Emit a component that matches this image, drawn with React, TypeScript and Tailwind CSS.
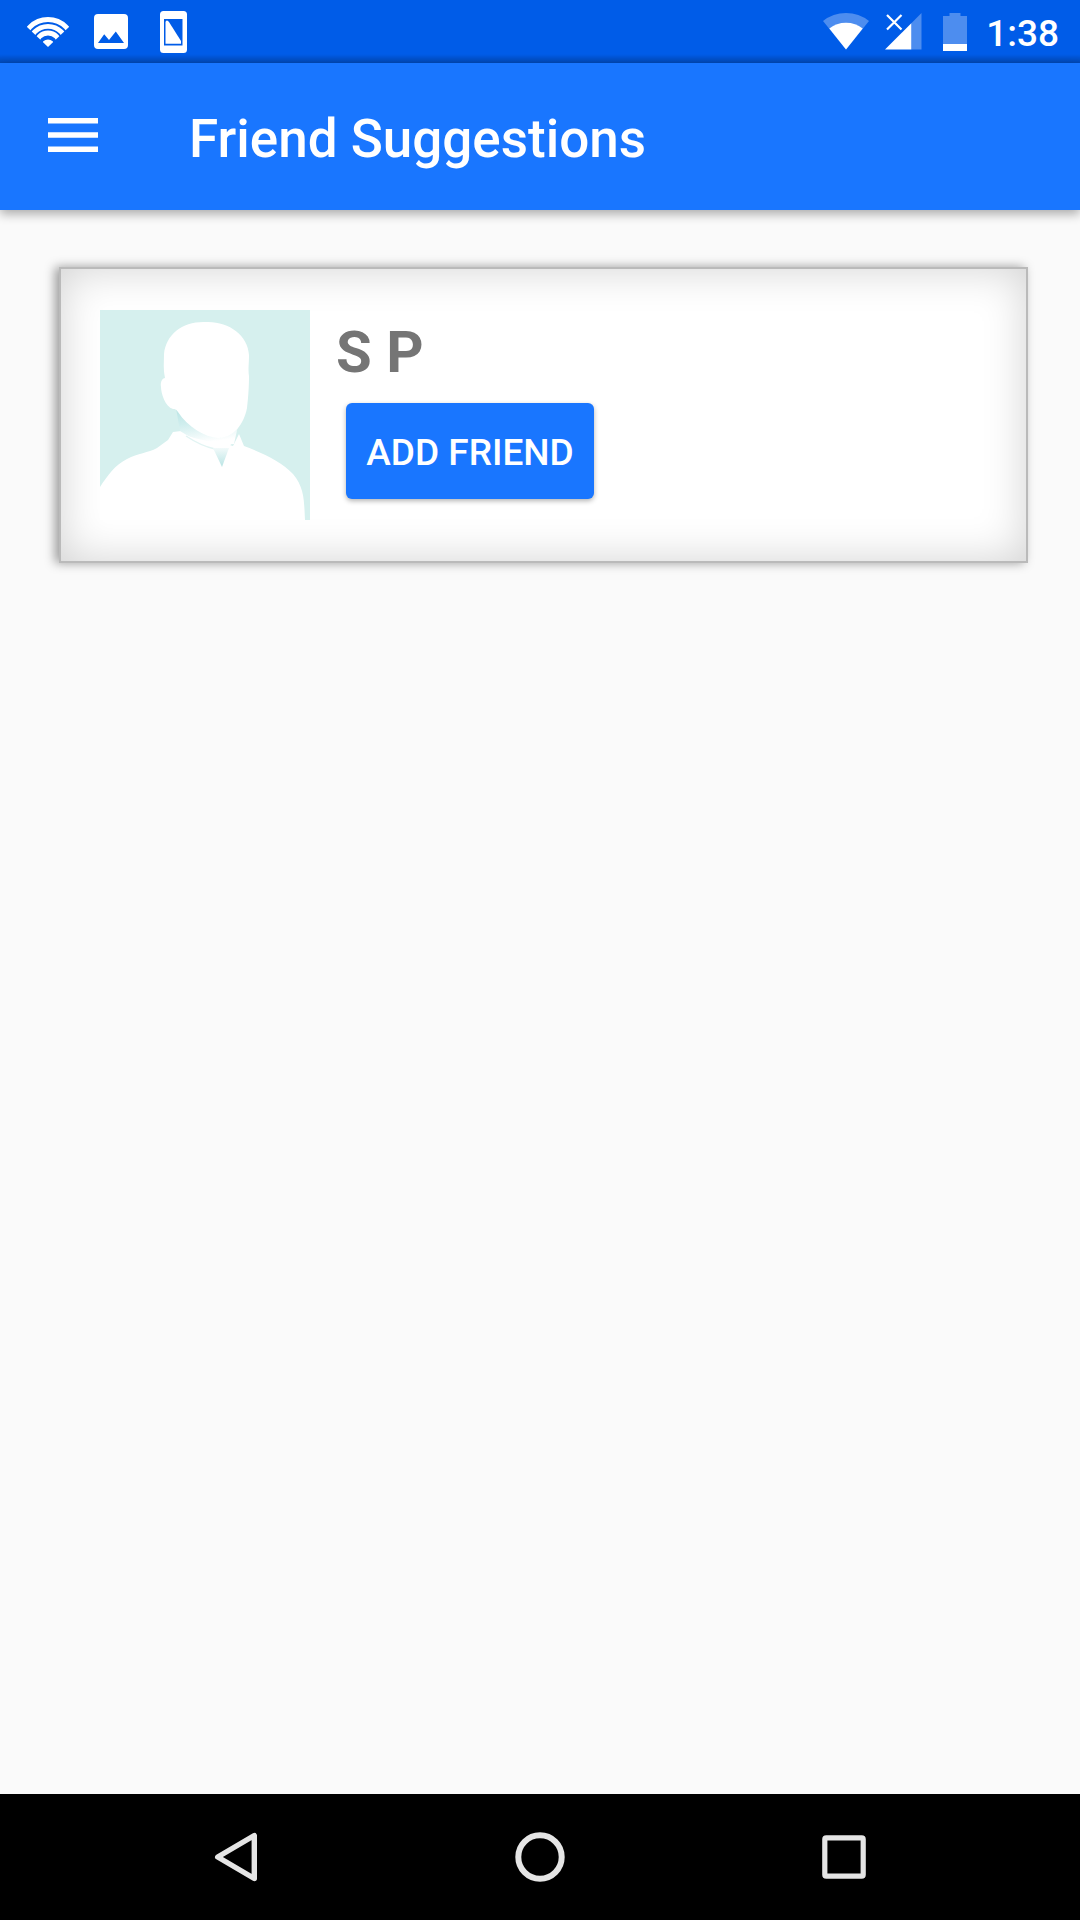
import React from 'react';

function WifiArcsIcon() {
  return (
    <svg width="42" height="30" viewBox="0 0 42 30" aria-hidden="true">
      <clipPath id="fan">
        <path d="M21 30 L-1 9 L-1 -2 H43 V9 Z" />
      </clipPath>
      <g clipPath="url(#fan)" fill="none" stroke="#fff" strokeWidth="4.8">
        <circle cx="21" cy="28" r="25.5" />
        <circle cx="21" cy="28" r="18.7" />
        <circle cx="21" cy="28" r="12" />
        <circle cx="21" cy="29" r="3.3" strokeWidth="6.6" />
      </g>
    </svg>
  );
}

function PictureIcon() {
  return (
    <svg width="34" height="35" viewBox="0 0 34 35" aria-hidden="true">
      <path
        fill="#fff"
        fillRule="evenodd"
        d="M4 0H30a4 4 0 0 1 4 4V31a4 4 0 0 1-4 4H4a4 4 0 0 1-4-4V4a4 4 0 0 1 4-4ZM4 29H30L21.8 17.5L15 26L10.2 20.3Z"
      />
    </svg>
  );
}

function PhoneIcon() {
  return (
    <svg width="27" height="42" viewBox="0 0 27 42" aria-hidden="true">
      <path
        fill="#fff"
        fillRule="evenodd"
        d="M3.5 0H23.5a3.5 3.5 0 0 1 3.5 3.5V38.5a3.5 3.5 0 0 1-3.5 3.5H3.5A3.5 3.5 0 0 1 0 38.5V3.5A3.5 3.5 0 0 1 3.5 0ZM4 8V34.5H22.5V8Z"
      />
      <path fill="#fff" d="M5.5 11.5Q5.5 9.5 7 9.5Q8 9.5 9 11L21 30V32.8H5.5Z" />
    </svg>
  );
}

function WifiLevelIcon() {
  return (
    <svg width="46" height="37" viewBox="0 0 46 37" aria-hidden="true">
      <path fill="#fff" fillOpacity="0.3" d="M23 36.5L0 8Q10 0 23 0T46 8Z" />
      <path fill="#fff" d="M23 36.5L6.3 15.5Q13.5 9.7 23 9.7T39.7 15.5Z" />
    </svg>
  );
}

function SignalIcon() {
  return (
    <svg width="37" height="37" viewBox="0 0 37 37" aria-hidden="true">
      <path fill="#fff" fillOpacity="0.3" d="M26.3 10.3L36.5 0V36.5H26.3Z" />
      <path fill="#fff" d="M0 36.5L26.3 10.2V36.5Z" />
      <path stroke="#fff" strokeWidth="2.2" d="M2 2L16.5 16.5M16.5 2L2 16.5" />
    </svg>
  );
}

function BatteryIcon() {
  return (
    <svg width="24" height="38" viewBox="0 0 24 38" aria-hidden="true">
      <path fill="#fff" fillOpacity="0.3" d="M6.5 0H17.5V3H24V31H0V3H6.5Z" />
      <path fill="#fff" d="M0 31H24V38H0Z" />
    </svg>
  );
}

function Avatar() {
  return (
    <svg className="size-[210px] shrink-0" viewBox="0 0 210 210" role="img" aria-label="Profile picture">
      <defs>
        <linearGradient id="neck" x1="0" y1="0" x2="0.25" y2="1">
          <stop offset="0" stopColor="#b9e4e4" />
          <stop offset="0.45" stopColor="#d0eeee" />
          <stop offset="1" stopColor="#fff" />
        </linearGradient>
        <linearGradient id="collar" x1="0" y1="0" x2="0" y2="1">
          <stop offset="0" stopColor="#f2fafa" />
          <stop offset="1" stopColor="#b9e4e4" />
        </linearGradient>
      </defs>
      <path fill="#d6f0ee" d="M0 0H210V210H0Z" />
      <path
        fill="#fff"
        d="M0 177C8 165 15 155 27 149C38 143 48 143 57 138L68 130L73 122L81 121L133 136L139 124L144 136C163 143 182 152 193 164C205 178 204 193 205 210H0Z"
      />
      <path fill="url(#neck)" d="M76 98L80 121Q104 138 134 134L138 116L120 128Z" />
      <path fill="#fff" d="M82 124Q103 132 131 134L128 140L116 140Z" />
      <path fill="none" stroke="#e2f4f3" strokeWidth="1.5" d="M86 126Q101 136 115 139" />
      <path fill="url(#collar)" d="M113 138L129 138L122 157Z" />
      <path
        fill="#fff"
        d="M106 12C128 11 148 25 149 45C149 54 148 58 149 66C149 78 148 90 147 98C144 114 134 127 119 128C104 127 88 117 78 102C76 99 75 99 73 99C65 97 61 83 61 77C60 71 63 68 65 68C63 60 64 52 64 44C66 24 83 11 106 12Z"
      />
    </svg>
  );
}

export default function App() {
  return (
    <div className="flex min-h-screen flex-col bg-[#fafafa] font-[Roboto,sans-serif]">
      <header className="flex h-[63px] items-center justify-between bg-[#005ce8] bg-[linear-gradient(to_bottom,transparent_54px,rgba(0,0,0,0.22)_63px)] pr-[21px] pl-[27px] text-white">
        <div className="flex items-center gap-[25px]">
          <WifiArcsIcon />
          <PictureIcon />
          <div className="pl-[7px]">
            <PhoneIcon />
          </div>
        </div>
        <div className="flex items-center">
          <div className="flex items-center gap-4 pr-[21px]">
            <WifiLevelIcon />
            <SignalIcon />
          </div>
          <BatteryIcon />
          <time className="pt-1 pl-[19px] text-[37px] leading-10 font-medium">1:38</time>
        </div>
      </header>

      <div className="relative flex h-[147px] items-center bg-[#1976ff] pl-[48px] text-white shadow-[0_4px_10px_rgba(0,0,0,0.32)]">
        <button type="button" aria-label="Open menu" className="pb-1">
          <svg width="50" height="34" viewBox="0 0 50 34" aria-hidden="true">
            <path fill="#fff" d="M0 0H50V5.5H0ZM0 14.3H50V19.8H0ZM0 28.5H50V34H0Z" />
          </svg>
        </button>
        <h1 className="pt-1 pl-[91px] text-[53px] leading-[62px] font-medium">Friend Suggestions</h1>
      </div>

      <main className="flex-1 overflow-hidden pt-[57px] pr-[52px] pl-[59px]">
        <article className="flex border-2 border-[#bababa] bg-white px-[39px] py-[41px] shadow-[-4px_0_10px_rgba(0,0,0,0.38),inset_0_0_44px_rgba(0,0,0,0.18)]">
          <Avatar />
          <div className="pt-2 pl-[26px]">
            <h2 className="text-[58px] leading-[68px] font-bold text-[#757575]">S P</h2>
            <button
              type="button"
              className="mt-[17px] ml-[10px] h-24 w-[248px] rounded-md bg-[#1976ff] pt-[3px] text-[37px] font-medium text-white shadow-[0_2px_5px_rgba(0,0,0,0.3)]"
            >
              ADD FRIEND
            </button>
          </div>
        </article>
      </main>

      <nav aria-label="System" className="grid h-[126px] grid-cols-3 bg-black px-[84px]">
        <button type="button" aria-label="Back" className="flex items-center justify-center">
          <svg width="50" height="50" viewBox="0 0 50 50" fill="none" stroke="#e5e5e5" strokeWidth="5.4" strokeLinejoin="round" aria-hidden="true">
            <path d="M43.3 3.5V46.5L6.7 25Z" />
          </svg>
        </button>
        <button type="button" aria-label="Home" className="flex items-center justify-center">
          <svg width="50" height="50" viewBox="0 0 50 50" fill="none" stroke="#e5e5e5" strokeWidth="6" aria-hidden="true">
            <circle cx="25" cy="25" r="21.7" />
          </svg>
        </button>
        <button type="button" aria-label="Recent apps" className="flex items-center justify-center">
          <svg width="50" height="50" viewBox="0 0 50 50" fill="none" stroke="#e5e5e5" strokeWidth="5.2" aria-hidden="true">
            <rect x="5.8" y="5.8" width="38.4" height="38.4" rx="1.5" />
          </svg>
        </button>
      </nav>
    </div>
  );
}
